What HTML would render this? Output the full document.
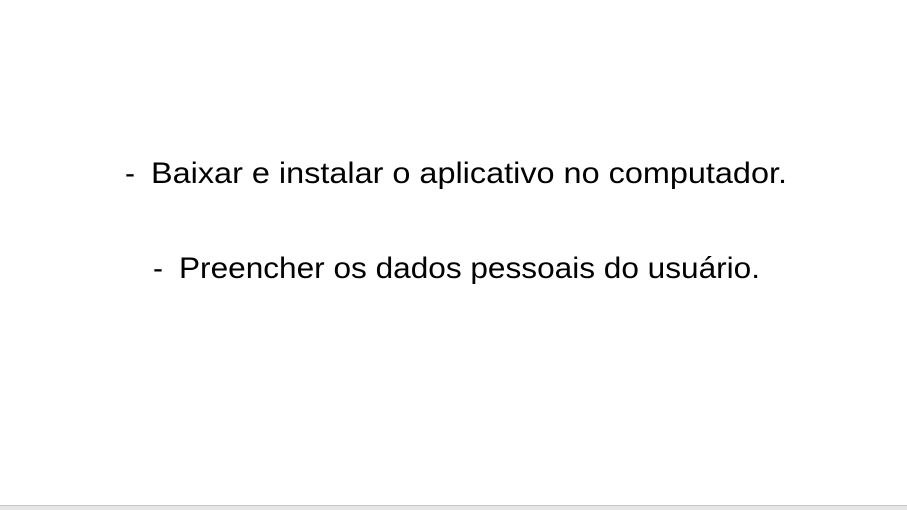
<!DOCTYPE html>
<html><head><style>
html,body{margin:0;padding:0;width:907px;height:510px;overflow:hidden;background:#fff}
.bar{position:absolute;left:0;top:505px;width:907px;height:1px;background:#c6c6c6}
.bar2{position:absolute;left:0;top:506px;width:907px;height:4px;background:#e6e6e6}
svg{position:absolute;left:0;top:0}
</style></head><body>
<svg width="907" height="510" font-family="Liberation Sans, sans-serif" font-size="30" fill="#000">
<text x="125" y="183">-</text>
<text x="151" y="183" textLength="636" lengthAdjust="spacingAndGlyphs">Baixar e instalar o aplicativo no computador.</text>
<text x="153" y="278">-</text>
<text x="179" y="278" textLength="581" lengthAdjust="spacingAndGlyphs">Preencher os dados pessoais do usuário.</text>
</svg>
<div class="bar"></div><div class="bar2"></div>
</body></html>
